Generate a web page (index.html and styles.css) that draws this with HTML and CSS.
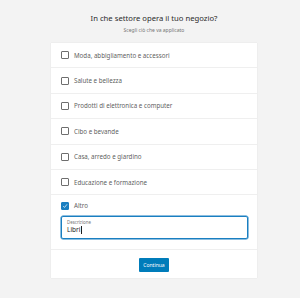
FILE: index.html
```html
<!DOCTYPE html>
<html lang="it">
<head>
    <meta charset="UTF-8">
    <title>Settore del negozio</title>
    <link rel="stylesheet" href="styles.css">
</head>
<body>
    <header>
        <h1 class="title">In che settore opera il tuo negozio?</h1>
        <p class="subtitle">Scegli ciò che va applicato</p>
    </header>
    <main class="card">
        <label class="row"><span class="box"></span>Moda, abbigliamento e accessori</label>
        <label class="row"><span class="box"></span>Salute e bellezza</label>
        <label class="row"><span class="box"></span>Prodotti di elettronica e computer</label>
        <label class="row"><span class="box"></span>Cibo e bevande</label>
        <label class="row"><span class="box"></span>Casa, arredo e giardino</label>
        <label class="row"><span class="box"></span>Educazione e formazione</label>
        <div class="row other">
            <label class="other-check">
                <span class="box checked">
                    <svg viewBox="0 0 10 10" width="8" height="8"><path d="M2 5.2 L4.2 7.4 L8.4 2.2" fill="none" stroke="#fff" stroke-width="1.2"/></svg>
                </span>Altro
            </label>
            <div class="field">
                <span class="field-label">Descrizione</span>
                <span class="field-value">Libri<span class="caret"></span></span>
            </div>
        </div>
        <div class="actions">
            <button class="btn">Continua</button>
        </div>
    </main>
</body>
</html>
```

FILE: styles.css
```css
* {
    margin: 0;
    padding: 0;
    box-sizing: border-box;
    font-family: 'Noto Sans', sans-serif;
}
body {
    background-color: #f3f3f3;
    width: 300px;
    height: 298px;
    overflow: hidden;
}
header {
    text-align: center;
    padding-top: 11px;
    padding-left: 8px;
    height: 43px;
}
header .title {
    font-size: 7.7px;
    font-weight: normal;
    color: #2b2b2b;
    line-height: 14px;
}
header .subtitle {
    font-size: 5px;
    color: #757575;
    line-height: 8px;
    margin-top: 1px;
}
.card {
    width: 206px;
    margin-left: 51px;
    background-color: white;
    box-shadow: 0 0 1px rgba(0, 0, 0, 0.12);
}
.row {
    display: flex;
    align-items: center;
    height: 25.4px;
    padding-left: 10px;
    border-bottom: 1px solid #efefef;
    font-size: 6.2px;
    color: #5f5f5f;
}
.box {
    width: 8px;
    height: 8px;
    border: 1px solid #6e6e6e;
    border-radius: 1px;
    margin-right: 5px;
    display: flex;
    align-items: center;
    justify-content: center;
}
.box.checked {
    background-color: #1a7fc1;
    border-color: #1a7fc1;
}
.row.other {
    height: 55px;
    flex-direction: column;
    align-items: stretch;
    padding: 6px 9px 0 10px;
}
.other-check {
    display: flex;
    align-items: center;
    height: 9px;
}
.field {
    margin-top: 6px;
    height: 23px;
    border: 1px solid #1a7fc1;
    border-radius: 2px;
    box-shadow: 0 0 0 0.5px #1a7fc1;
    padding: 2px 0 0 5px;
    display: flex;
    flex-direction: column;
}
.field-label {
    font-size: 4.4px;
    color: #757575;
    line-height: 6px;
}
.field-value {
    font-size: 6.5px;
    color: #1e1e1e;
    line-height: 10px;
    display: flex;
    align-items: center;
}
.caret {
    width: 0.7px;
    height: 8px;
    background-color: #1e1e1e;
    margin-left: 0.5px;
}
.actions {
    height: 28px;
    display: flex;
    justify-content: center;
    padding-top: 8px;
}
.btn {
    width: 30px;
    height: 14px;
    background-color: #007cba;
    color: white;
    border: none;
    border-radius: 1px;
    font-size: 5px;
}
```
